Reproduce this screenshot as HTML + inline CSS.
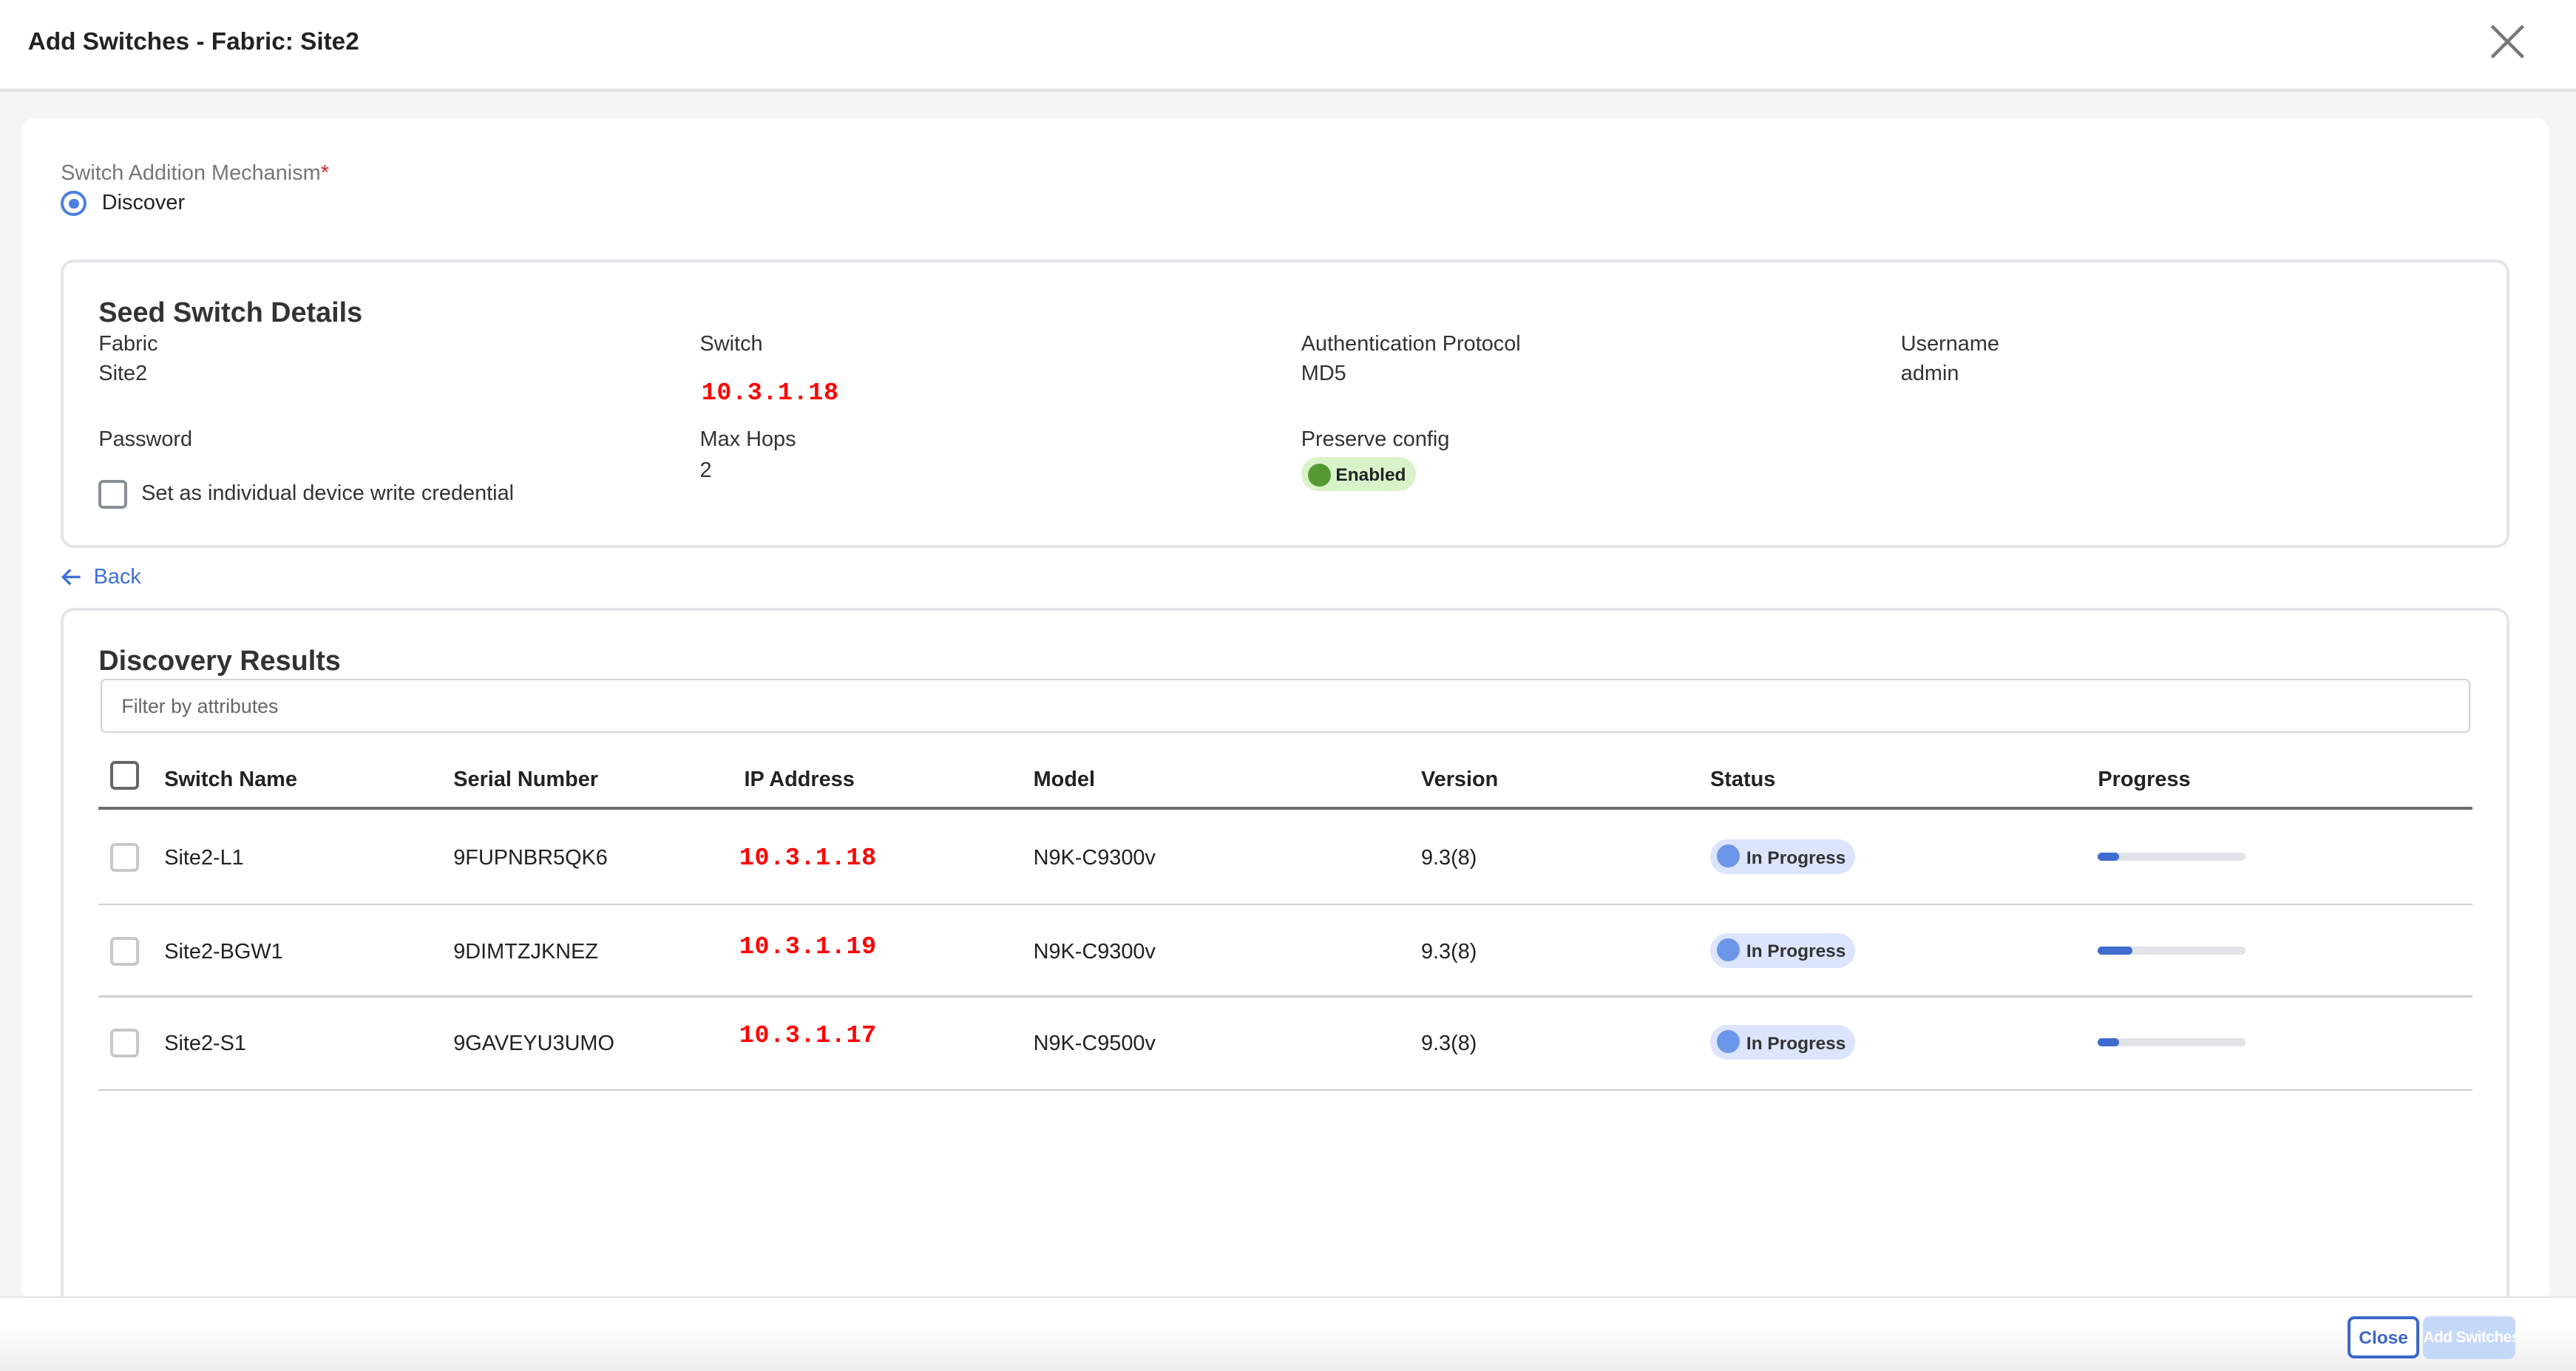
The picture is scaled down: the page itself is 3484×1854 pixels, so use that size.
<!DOCTYPE html>
<html><head><meta charset="utf-8"><style>
html,body{margin:0;padding:0;width:3484px;height:1854px;overflow:hidden;background:#f5f5f5}
#z{zoom:2.22194;position:relative;width:1568px;height:835px;font-family:"Liberation Sans",sans-serif;color:#222;font-size:13px}
.a{position:absolute;white-space:nowrap}
.t{margin-top:1px}
.lbl{font-size:13px;color:#333}
.ip{font-family:"Liberation Mono",monospace;font-weight:bold;color:#f00;font-size:15px;letter-spacing:0.3px}
.cb{position:absolute;width:14px;height:14px;border:2px solid #c8c8c8;border-radius:3px;background:#fff}
.pill{position:absolute;left:1041px;width:88px;height:21px;border-radius:11px;background:#dce5fd;font-size:11px;font-weight:bold;color:#333}
.pill i{position:absolute;left:4px;top:3px;width:14px;height:14px;border-radius:50%;background:#6b96ea}
.pill span{position:absolute;left:22px;top:5px}
.bar{position:absolute;left:1277px;width:90px;height:5px;border-radius:3px;background:#e2e3e6}
.bar b{display:block;height:5px;border-radius:3px;background:#3e6ccf}
.hr{position:absolute;left:60px;width:1445px;height:1px;background:#cfcfcf}
</style></head><body><div id="z">
<div class="a" style="left:0;top:0;width:1568px;height:54px;background:#fff;border-bottom:2px solid #e3e3e3"></div>
<div class="a t" style="left:17px;top:16px;font-size:15px;font-weight:bold;color:#222">Add Switches - Fabric: Site2</div>
<svg class="a" style="left:1516px;top:15px" width="21" height="21"><path d="M1 1L20 20M20 1L1 20" stroke="#777" stroke-width="2"/></svg>
<div class="a" style="left:13px;top:72px;width:1539px;height:720px;background:#fff;border-radius:8px"></div>
<div class="a t" style="left:37px;top:97px;color:#777">Switch Addition Mechanism<span style="color:#d22">*</span></div>
<div class="a" style="left:37px;top:116px;width:12px;height:12px;border:2px solid #4d7fe0;border-radius:50%"></div>
<div class="a" style="left:42px;top:121px;width:6px;height:6px;background:#4d7fe0;border-radius:50%"></div>
<div class="a t" style="left:62px;top:115px;color:#222">Discover</div>

<div class="a" style="left:37px;top:158px;width:1487px;height:172px;border:2px solid #e3e5e9;border-radius:8px;background:#fff"></div>
<div class="a t" style="left:60px;top:180px;font-size:17px;font-weight:bold;color:#333">Seed Switch Details</div>
<div class="a lbl t" style="left:60px;top:201px">Fabric</div>
<div class="a lbl t" style="left:60px;top:219px">Site2</div>
<div class="a lbl t" style="left:426px;top:201px">Switch</div>
<div class="a ip t" style="left:427px;top:230px">10.3.1.18</div>
<div class="a lbl t" style="left:792px;top:201px">Authentication Protocol</div>
<div class="a lbl t" style="left:792px;top:219px">MD5</div>
<div class="a lbl t" style="left:1157px;top:201px">Username</div>
<div class="a lbl t" style="left:1157px;top:219px">admin</div>
<div class="a lbl t" style="left:60px;top:259px">Password</div>
<div class="cb" style="left:60px;top:292px;border-color:#8a8f96"></div>
<div class="a lbl t" style="left:86px;top:292px">Set as individual device write credential</div>
<div class="a lbl t" style="left:426px;top:259px">Max Hops</div>
<div class="a lbl t" style="left:426px;top:278px">2</div>
<div class="a lbl t" style="left:792px;top:259px">Preserve config</div>
<div class="a" style="left:792px;top:278px;width:70px;height:21px;border-radius:11px;background:#d8f3c9"></div>
<div class="a" style="left:796px;top:282px;width:14px;height:14px;border-radius:50%;background:#559933"></div>
<div class="a t" style="left:813px;top:282px;font-size:11px;font-weight:bold;color:#222">Enabled</div>

<svg class="a" style="left:37px;top:345px" width="13" height="12"><path d="M12 6H2M6 1.5L1.5 6L6 10.5" stroke="#3d6fd6" stroke-width="1.5" fill="none"/></svg>
<div class="a t" style="left:57px;top:343px;color:#3d6fd6">Back</div>

<div class="a" style="left:37px;top:370px;width:1487px;height:440px;border:2px solid #e3e5e9;border-radius:8px;background:#fff"></div>
<div class="a t" style="left:60px;top:392px;font-size:17px;font-weight:bold;color:#333">Discovery Results</div>
<div class="a" style="left:61px;top:413px;width:1441px;height:31px;border:1px solid #cfd2d6;border-radius:3px"></div>
<div class="a t" style="left:74px;top:422px;font-size:12px;color:#666">Filter by attributes</div>
<div class="cb" style="left:67px;top:463px;border-color:#666"></div>
<div class="a t" style="left:100px;top:466px;font-weight:bold;color:#222">Switch Name</div>
<div class="a t" style="left:276px;top:466px;font-weight:bold;color:#222">Serial Number</div>
<div class="a t" style="left:453px;top:466px;font-weight:bold;color:#222">IP Address</div>
<div class="a t" style="left:629px;top:466px;font-weight:bold;color:#222">Model</div>
<div class="a t" style="left:865px;top:466px;font-weight:bold;color:#222">Version</div>
<div class="a t" style="left:1041px;top:466px;font-weight:bold;color:#222">Status</div>
<div class="a t" style="left:1277px;top:466px;font-weight:bold;color:#222">Progress</div>
<div class="a" style="left:60px;top:491px;width:1445px;height:2px;background:#676d73"></div>

<div class="cb" style="left:67px;top:513px"></div>
<div class="a t" style="left:100px;top:514px">Site2-L1</div>
<div class="a t" style="left:276px;top:514px">9FUPNBR5QK6</div>
<div class="a ip t" style="left:450px;top:513px">10.3.1.18</div>
<div class="a t" style="left:629px;top:514px">N9K-C9300v</div>
<div class="a t" style="left:865px;top:514px">9.3(8)</div>
<div class="pill" style="top:511px"><i></i><span>In Progress</span></div>
<div class="bar" style="top:519px"><b style="width:13px"></b></div>
<div class="hr" style="top:550px"></div>

<div class="cb" style="left:67px;top:570px"></div>
<div class="a t" style="left:100px;top:571px">Site2-BGW1</div>
<div class="a t" style="left:276px;top:571px">9DIMTZJKNEZ</div>
<div class="a ip t" style="left:450px;top:567px">10.3.1.19</div>
<div class="a t" style="left:629px;top:571px">N9K-C9300v</div>
<div class="a t" style="left:865px;top:571px">9.3(8)</div>
<div class="pill" style="top:568px"><i></i><span>In Progress</span></div>
<div class="bar" style="top:576px"><b style="width:21px"></b></div>
<div class="hr" style="top:606px"></div>

<div class="cb" style="left:67px;top:626px"></div>
<div class="a t" style="left:100px;top:627px">Site2-S1</div>
<div class="a t" style="left:276px;top:627px">9GAVEYU3UMO</div>
<div class="a ip t" style="left:450px;top:621px">10.3.1.17</div>
<div class="a t" style="left:629px;top:627px">N9K-C9500v</div>
<div class="a t" style="left:865px;top:627px">9.3(8)</div>
<div class="pill" style="top:624px"><i></i><span>In Progress</span></div>
<div class="bar" style="top:632px"><b style="width:13px"></b></div>
<div class="hr" style="top:663px"></div>

<div class="a" style="left:0;top:789px;width:1568px;height:46px;background:linear-gradient(#fff 40%,#ececec);border-top:1px solid #e3e3e3"></div>
<div class="a" style="left:1429px;top:801px;width:40px;height:22px;border:2px solid #3d66c9;border-radius:4px;background:#fff;font-size:11px;font-weight:bold;color:#3d66c9;text-align:center;line-height:23px">Close</div>
<div class="a" style="left:1475px;top:801px;width:56px;height:26px;border-radius:4px;background:#c6d8f8;font-size:9.5px;font-weight:bold;color:#fff;text-align:center;line-height:26px;letter-spacing:-0.3px">Add Switches</div>
</div></body></html>
